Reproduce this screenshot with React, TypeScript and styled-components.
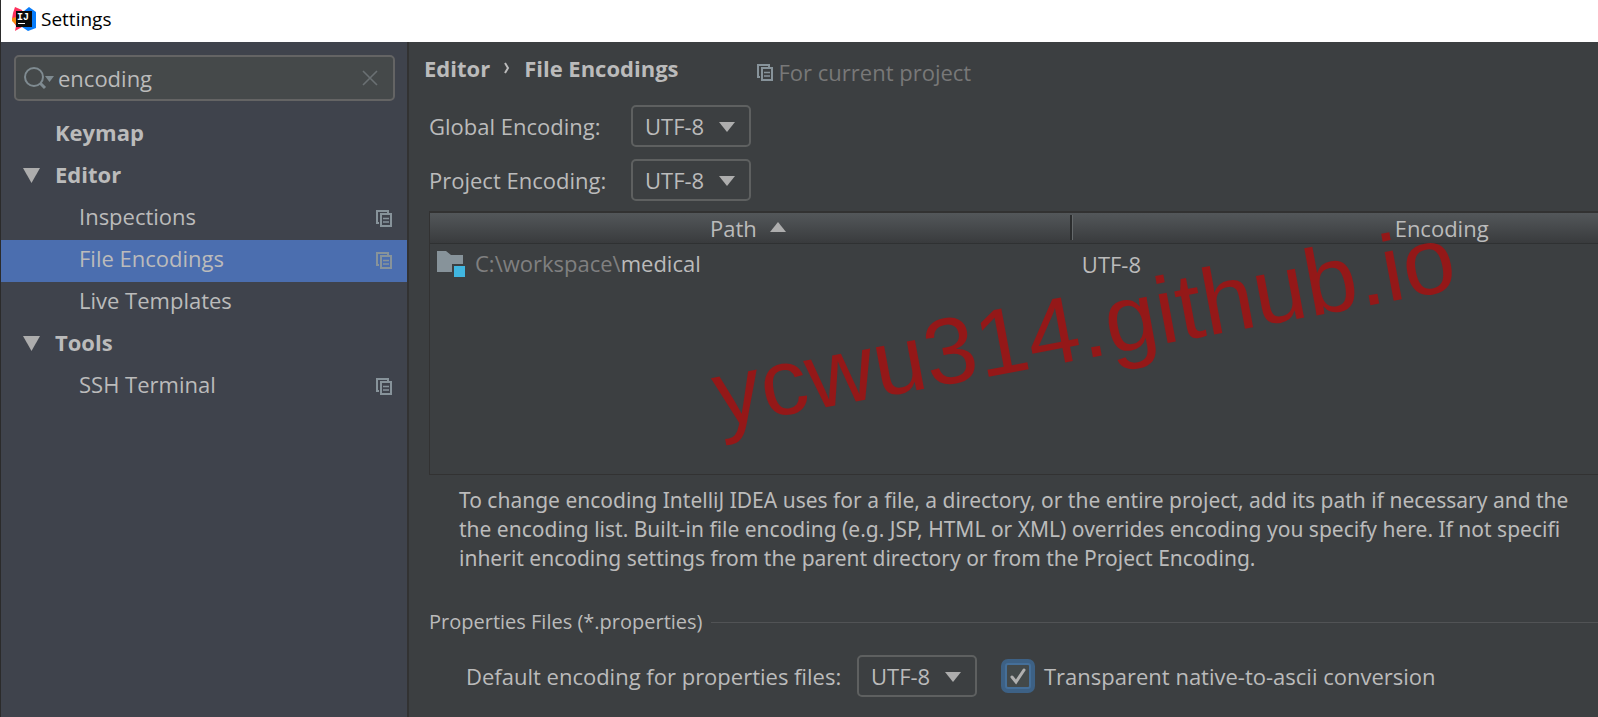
import React from "react";
import styled, { createGlobalStyle } from "styled-components";

const sans = `"Open Sans", "Noto Sans", "Noto Sans CJK SC", sans-serif`;

const GlobalStyle = createGlobalStyle`
  * { box-sizing: border-box; }
  html, body, #root { height: 100%; }
  body {
    margin: 0;
    background: #3c3f41;
    color: #bbbbbb;
    font: 22px/28px ${sans};
    overflow: hidden;
  }
  button, input, select { font: inherit; color: inherit; margin: 0; }
`;

const Window = styled.div`
  position: relative;
  display: flex;
  flex-direction: column;
  min-height: 100%;
  border-left: 1px solid #2b2b2b;
  overflow: hidden;
`;

const TitleBar = styled.header`
  display: flex;
  align-items: center;
  gap: 5px;
  height: 42px;
  padding: 0 11px 4px;
  background: #ffffff;
  color: #000000;
  font-size: 19px;
`;

const Body = styled.div`
  display: flex;
  flex: 1;
`;

const Sidebar = styled.aside`
  flex: none;
  width: 408px;
  padding-top: 13px;
  background: #3f434c;
  border-right: 2px solid #323232;
`;

const SearchBox = styled.div`
  display: flex;
  align-items: center;
  height: 46px;
  margin: 0 12px 12px 13px;
  padding: 0 15px 0 8px;
  background: #45494a;
  border: 2px solid #646464;
  border-radius: 5px;
`;

const SearchInput = styled.input`
  flex: 1;
  min-width: 0;
  padding: 0 0 0 4px;
  background: none;
  border: 0;
  outline: 0;
`;

const ClearButton = styled.button`
  display: flex;
  padding: 0;
  background: none;
  border: 0;
`;

const TreeRow = styled.button<{ $child?: boolean; $selected?: boolean }>`
  display: flex;
  align-items: center;
  width: 100%;
  height: 42px;
  padding: 0 15px 2px ${(p) => (p.$child ? 78 : 22)}px;
  background: ${(p) => (p.$selected ? "#4b6eaf" : "transparent")};
  border: 0;
  font-weight: ${(p) => (p.$child ? 400 : 700)};
  text-align: left;
`;

const Tree = styled.nav`
  padding-top: 1px;
`;

const TreeArrow = styled.span`
  display: flex;
  width: 32px;
`;

const TreeLabel = styled.span`
  flex: 1;
  padding-bottom: 4px;
`;

const Main = styled.main`
  flex: 1;
  min-width: 0;
  padding-left: 15px;
  overflow: hidden;
`;

const Heading = styled.div`
  display: flex;
  align-items: center;
  height: 63px;
  gap: 78px;
  padding-bottom: 11px;
`;

const Breadcrumb = styled.h1`
  display: flex;
  align-items: center;
  gap: 14px;
  margin: 0;
  font-size: 22px;
`;

const Scope = styled.div`
  display: flex;
  align-items: center;
  gap: 6px;
  padding-top: 8px;
  color: #787878;
`;

const Content = styled.div`
  padding-left: 5px;
`;

const EncodingRow = styled.div`
  display: flex;
  align-items: center;
  margin-bottom: 12px;
`;

const EncodingLabel = styled.label`
  width: 202px;
  padding-bottom: 1px;
`;

const SelectWrap = styled.span`
  position: relative;
  display: inline-flex;
`;

const Select = styled.select`
  width: 120px;
  height: 42px;
  padding: 0 0 0 12px;
  appearance: none;
  background: #3c3f41;
  border: 2px solid #5e6060;
  border-radius: 5px;
`;

const SelectArrow = styled.svg`
  position: absolute;
  right: 16px;
  top: 17px;
  pointer-events: none;
`;

const TableFrame = styled.div`
  width: 118%;
  height: 264px;
  margin-top: -2px;
  border: 1px solid #323232;
  border-top-width: 2px;
`;

const Table = styled.table`
  width: 100%;
  table-layout: fixed;
  border-collapse: collapse;
`;

const HeadRow = styled.tr`
  height: 30px;
  background: linear-gradient(#53575a, #393b3d);
`;

const HeadCell = styled.th<{ $first?: boolean }>`
  width: ${(p) => (p.$first ? "46.6%" : "auto")};
  padding: 0;
  border-bottom: 1px solid #2f3132;
  font-weight: 400;
`;

const HeadInner = styled.div<{ $divided?: boolean }>`
  display: flex;
  align-items: center;
  justify-content: center;
  gap: 13px;
  height: 25px;
  padding: ${(p) => (p.$divided ? "1px 4px 0 0" : "1px 0 0 4px")};
  border-right: ${(p) => (p.$divided ? "2px solid #2b2d2e" : "0")};
  box-shadow: ${(p) => (p.$divided ? "1px 0 #65696b" : "none")};
`;

const SortArrow = styled.svg`
  margin-bottom: 2px;
`;

const Cell = styled.td`
  height: 42px;
  padding: 0 0 1px 10px;
`;

const PathCell = styled.div`
  display: flex;
  align-items: center;
  gap: 10px;
  margin-left: -3px;
`;

const PathText = styled.span`
  padding-bottom: 1px;
`;

const Muted = styled.span`
  color: #808080;
`;

const Note = styled.p`
  margin: 11px 0 0 30px;
  font-family: "Noto Sans", "Open Sans", sans-serif;
  font-size: 21px;
  line-height: 29px;
  white-space: nowrap;
`;

const Group = styled.fieldset`
  margin: 35px 0 0;
  padding: 0;
  border: 0;
`;

const GroupTitle = styled.legend`
  display: flex;
  align-items: center;
  gap: 9px;
  width: 100%;
  padding: 0;
  font-size: 20px;
  &::after {
    content: "";
    flex: 1;
    height: 1px;
    background: #515355;
  }
`;

const GroupRow = styled.div`
  display: flex;
  align-items: center;
  padding: 19px 0 0 37px;
`;

const DefaultLabel = styled.label`
  width: 391px;
`;

const CheckLabel = styled.label`
  display: flex;
  align-items: center;
  gap: 9px;
  margin-left: 28px;
`;

const CheckWrap = styled.span`
  position: relative;
  display: flex;
`;

const Checkbox = styled.input`
  && {
    margin: 0 4px 0 0;
  }
  appearance: none;
  width: 26px;
  height: 26px;
  background: #43494a;
  border: 2px solid #456f99;
  border-radius: 3px;
  box-shadow: 0 0 0 4px #3d6185;
`;

const CheckMark = styled.svg`
  position: absolute;
  left: 4px;
  top: 3px;
  pointer-events: none;
`;

const Watermark = styled.div`
  position: absolute;
  left: 719px;
  top: 348px;
  color: #941818;
  font: 94px/94px "Liberation Sans", Arial, sans-serif;
  white-space: nowrap;
  transform: rotate(-10.6deg);
  transform-origin: 0 80px;
  pointer-events: none;
`;

const Logo = () => (
  <svg width="24" height="24" viewBox="0 0 24 24" aria-hidden="true">
    <path d="M3 0 L10 3 L12 12 L10 20 L3 24 L4 19 L0 12 L1 6Z" fill="#fe315d" />
    <path d="M0 11 L5 10 L5 18 L3 17 L0 14Z" fill="#f98a12" />
    <path d="M12 4 L17 0 L24 5 L24 21 L16 24 L10 20Z" fill="#087cfa" />
    <rect x="4" y="4" width="16" height="16" fill="#0b0b0b" />
    <text x="5" y="13" fill="#ffffff" fontFamily="Liberation Mono" fontWeight="700" fontSize="10">IJ</text>
    <rect x="6" y="16" width="7" height="1" fill="#ffffff" />
  </svg>
);

const SearchIcon = () => (
  <svg width="30" height="24" viewBox="0 0 30 24" fill="none" aria-hidden="true">
    <circle cx="10" cy="11" r="9" stroke="#7f8b91" strokeWidth="2" />
    <path d="M16 17 L21 22" stroke="#7f8b91" strokeWidth="3" />
    <path d="M21 10 H30 L25.5 16Z" fill="#7f8b91" />
  </svg>
);

const ClearIcon = () => (
  <svg width="16" height="16" viewBox="0 0 16 16" fill="none" aria-hidden="true">
    <path d="M1 1 L15 15 M15 1 L1 15" stroke="#6a7073" strokeWidth="1.6" />
  </svg>
);

const ProjectIcon = () => (
  <svg width="16" height="17" viewBox="0 0 16 17" fill="none" aria-hidden="true">
    <path d="M3 13 H1 V1 H12 V3" stroke="#87939a" strokeWidth="2" />
    <path d="M5 4 H15 V16 H5Z" stroke="#87939a" strokeWidth="2" />
    <path d="M7 8.5 H13 M7 12 H13" stroke="#87939a" strokeWidth="1.6" />
  </svg>
);

const TreeTriangle = () => (
  <svg width="17" height="16" viewBox="0 0 17 16" aria-hidden="true">
    <path d="M0 0 H17 L8.5 15Z" fill="#adadad" />
  </svg>
);

const FolderIcon = () => (
  <svg width="28" height="28" viewBox="0 0 28 28" aria-hidden="true">
    <path d="M0 1 H9 L14 5 H26 V14 H15 V22 H0Z" fill="#87939a" />
    <rect x="17" y="16" width="11" height="11" fill="#40b6e0" />
  </svg>
);

const tree = [
  { label: "Keymap" },
  { label: "Editor", open: true },
  { label: "Inspections", child: true, project: true },
  { label: "File Encodings", child: true, project: true, selected: true },
  { label: "Live Templates", child: true },
  { label: "Tools", open: true },
  { label: "SSH Terminal", child: true, project: true },
];

const EncodingSelect = ({ id }: { id: string }) => (
  <SelectWrap>
    <Select id={id} defaultValue="UTF-8">
      <option>UTF-8</option>
    </Select>
    <SelectArrow width="16" height="10" viewBox="0 0 16 10" aria-hidden="true">
      <path d="M0 0 H16 L8 10Z" fill="#adadad" />
    </SelectArrow>
  </SelectWrap>
);

export default function App() {
  return (
    <>
      <GlobalStyle />
      <Window>
        <TitleBar>
          <Logo />
          <span>Settings</span>
        </TitleBar>
        <Body>
          <Sidebar>
            <SearchBox>
              <SearchIcon />
              <SearchInput aria-label="Search settings" defaultValue="encoding" />
              <ClearButton aria-label="Clear search">
                <ClearIcon />
              </ClearButton>
            </SearchBox>
            <Tree>
              {tree.map((item) => (
                <TreeRow key={item.label} $child={item.child} $selected={item.selected}>
                  {!item.child && <TreeArrow>{item.open && <TreeTriangle />}</TreeArrow>}
                  <TreeLabel>{item.label}</TreeLabel>
                  {item.project && <ProjectIcon />}
                </TreeRow>
              ))}
            </Tree>
          </Sidebar>
          <Main>
            <Heading>
              <Breadcrumb>
                <span>Editor</span>
                <svg width="6" height="12" viewBox="0 0 6 12" fill="none" aria-hidden="true">
                  <path d="M1 1 L4 6 L1 11" stroke="#bbbbbb" strokeWidth="2" />
                </svg>
                <span>File Encodings</span>
              </Breadcrumb>
              <Scope>
                <ProjectIcon />
                <span>For current project</span>
              </Scope>
            </Heading>
            <Content>
              <EncodingRow>
                <EncodingLabel htmlFor="global">Global Encoding:</EncodingLabel>
                <EncodingSelect id="global" />
              </EncodingRow>
              <EncodingRow>
                <EncodingLabel htmlFor="project">Project Encoding:</EncodingLabel>
                <EncodingSelect id="project" />
              </EncodingRow>
              <TableFrame>
                <Table>
                  <thead>
                    <HeadRow>
                      <HeadCell $first>
                        <HeadInner $divided>
                          Path
                          <SortArrow width="16" height="10" viewBox="0 0 16 10" aria-hidden="true">
                            <path d="M0 10 H16 L8 0Z" fill="#adadad" />
                          </SortArrow>
                        </HeadInner>
                      </HeadCell>
                      <HeadCell>
                        <HeadInner>Encoding</HeadInner>
                      </HeadCell>
                    </HeadRow>
                  </thead>
                  <tbody>
                    <tr>
                      <Cell>
                        <PathCell>
                          <FolderIcon />
                          <PathText>
                            <Muted>C:\workspace\</Muted>medical
                          </PathText>
                        </PathCell>
                      </Cell>
                      <Cell>UTF-8</Cell>
                    </tr>
                  </tbody>
                </Table>
              </TableFrame>
              <Note>
                To change encoding IntelliJ IDEA uses for a file, a directory, or the entire project, add its path if necessary and the
                <br />
                the encoding list. Built-in file encoding (e.g. JSP, HTML or XML) overrides encoding you specify here. If not specifi
                <br />
                inherit encoding settings from the parent directory or from the Project Encoding.
              </Note>
              <Group>
                <GroupTitle>Properties Files (*.properties)</GroupTitle>
                <GroupRow>
                  <DefaultLabel htmlFor="default">Default encoding for properties files:</DefaultLabel>
                  <EncodingSelect id="default" />
                  <CheckLabel>
                    <CheckWrap>
                      <Checkbox type="checkbox" defaultChecked />
                      <CheckMark width="18" height="20" viewBox="0 0 18 20" fill="none" aria-hidden="true">
                        <path d="M3 11 L7 16 L15 4" stroke="#b0b0b0" strokeWidth="3" strokeLinecap="round" />
                      </CheckMark>
                    </CheckWrap>
                    Transparent native-to-ascii conversion
                  </CheckLabel>
                </GroupRow>
              </Group>
            </Content>
          </Main>
        </Body>
        <Watermark>ycwu314.github.io</Watermark>
      </Window>
    </>
  );
}
